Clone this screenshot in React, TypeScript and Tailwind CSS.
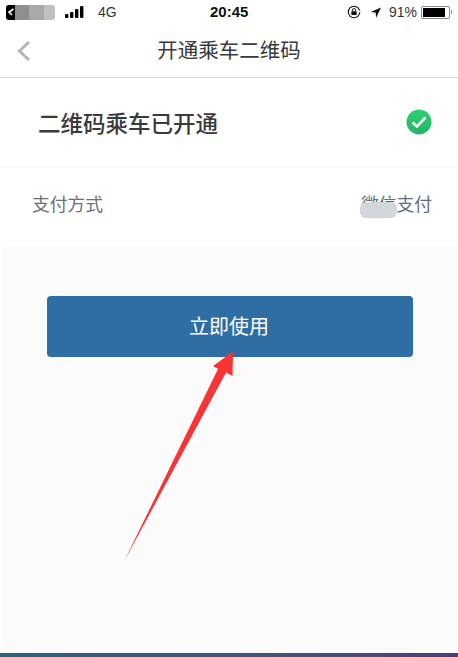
import React from "react";

export default function App() {
  return (
    <div className="relative w-[458px] h-[657px] bg-white overflow-hidden flex flex-col font-['Noto_Sans_CJK_SC','Noto_Sans',sans-serif]">
      {/* status bar */}
      <div className="h-[24px] flex items-center justify-between pl-[6px] pr-[6px] shrink-0 font-['Liberation_Sans',sans-serif]">
        <div className="flex items-center w-[190px]">
          <div className="relative w-[49px] h-[15px] flex items-stretch overflow-hidden rounded-[3px]">
            <div className="w-[9px] bg-black flex items-center justify-center">
              <svg width="8" height="8" viewBox="0 0 8 8"><path d="M6.5 1 L2 4 L5 7" stroke="#fff" strokeWidth="1.6" fill="none" /></svg>
            </div>
            <div className="w-[14px] bg-[#8f8f8f]" />
            <div className="w-[15px] bg-[#a9a9a9]" />
            <div className="w-[11px] bg-[#c0c0c0]" />
          </div>
          <svg className="ml-[10px]" width="20" height="13" viewBox="0 0 20 13" fill="#000">
            <rect x="0" y="8" width="3.4" height="4" rx="1" />
            <rect x="5" y="6" width="3.4" height="6" rx="1" />
            <rect x="10" y="3" width="3.4" height="9" rx="1" />
            <rect x="15" y="0" width="3.4" height="12" rx="1" />
          </svg>
          <span className="ml-[13px] text-[14px] text-[#333] leading-none">4G</span>
        </div>
        <span className="text-[15px] font-bold text-[#111] leading-none absolute left-[210px] top-[4px]">20:45</span>
        <div className="flex items-center">
          <svg width="14" height="14" viewBox="0 0 14 14" fill="none">
            <circle cx="7" cy="7" r="5.7" stroke="#111" strokeWidth="1.1" />
            <path d="M12 5 L14 7.2 L10.6 7.2 Z" fill="#fff" />
            <rect x="4.4" y="6.2" width="5.2" height="3.8" fill="#111" />
            <path d="M5.5 6.2 V5 A1.5 1.5 0 0 1 8.5 5 V6.2" stroke="#111" strokeWidth="0.9" />
          </svg>
          <svg className="ml-[9px]" width="11" height="11" viewBox="0 0 11 11"><path d="M11 0.5 L0.5 5 L5.6 5.6 L6.2 10.8 Z" fill="#111" /></svg>
          <span className="ml-[8px] text-[14px] text-[#333] leading-none">91%</span>
          <div className="ml-[4px] w-[29px] h-[13px] border border-[#888] rounded-[2px] p-[1px]">
            <div className="w-[88%] h-full bg-black" />
          </div>
          <div className="ml-[1px] w-[1px] h-[4px] bg-[#888]" />
        </div>
      </div>

      {/* nav */}
      <div className="relative h-[54px] border-b border-[#d6d6d6] flex items-center justify-center shrink-0">
        <svg className="absolute left-[16px] top-[16px]" width="15" height="22" viewBox="0 0 15 22" fill="none">
          <path d="M13 2 L3.5 11 L13 20" stroke="#b4b4b4" strokeWidth="3" />
        </svg>
        <span className="text-[20.5px] text-[#3a3a3a] leading-none relative top-[-1px]">开通乘车二维码</span>
      </div>

      {/* opened row */}
      <div className="h-[90px] flex items-center justify-between pl-[38px] pr-[26px] border-b border-[#f8f8f8] shrink-0">
        <span className="text-[22.5px] font-medium text-[#3a3a3a] leading-none">二维码乘车已开通</span>
        <svg className="relative top-[-1px]" width="26" height="26" viewBox="0 0 26 26">
          <defs>
            <linearGradient id="g" x1="0" y1="0" x2="0" y2="1">
              <stop offset="0" stopColor="#2fcf73" />
              <stop offset="1" stopColor="#22b468" />
            </linearGradient>
          </defs>
          <circle cx="13" cy="13" r="12.5" fill="url(#g)" />
          <path d="M6.5 13.5 L11 17.5 L19.5 8.5" stroke="#fff" strokeWidth="2.6" fill="none" />
        </svg>
      </div>

      {/* payment row */}
      <div className="h-[79px] flex items-center justify-between pl-[32px] pr-[26px] shrink-0">
        <span className="text-[17.75px] text-[#6f6f6f] leading-none relative top-[-4px]">支付方式</span>
        <span className="relative text-[17.75px] text-[#5a7080] leading-none top-[-4px]">
          微信支付
          <span className="absolute left-[-1px] top-[7px] w-[37px] h-[16px] rounded-[6px] bg-[#d3d7dc]" />
        </span>
      </div>

      {/* content */}
      <div className="flex-1 ml-[2px] mr-[1px] bg-[#fbfbfb] pt-[49px] pl-[45px] pr-[44px]">
        <div className="h-[61px] rounded-[4px] bg-[#2f6ea5] flex items-center justify-center pr-[2px] pb-[2px]">
          <span className="text-[20px] text-white leading-none">立即使用</span>
        </div>
      </div>

      <div className="h-[4px] shrink-0 bg-gradient-to-r from-[#2b6278] via-[#3f5878] to-[#4d3f78]" />

      {/* annotation arrow */}
      <svg className="absolute left-0 top-0 pointer-events-none" width="458" height="657" viewBox="0 0 458 657">
        <path d="M233 351.5 L232.5 376 L226 372.5 L124 561.5 L218 369 L213 366 Z" fill="#f93434" />
      </svg>
    </div>
  );
}
